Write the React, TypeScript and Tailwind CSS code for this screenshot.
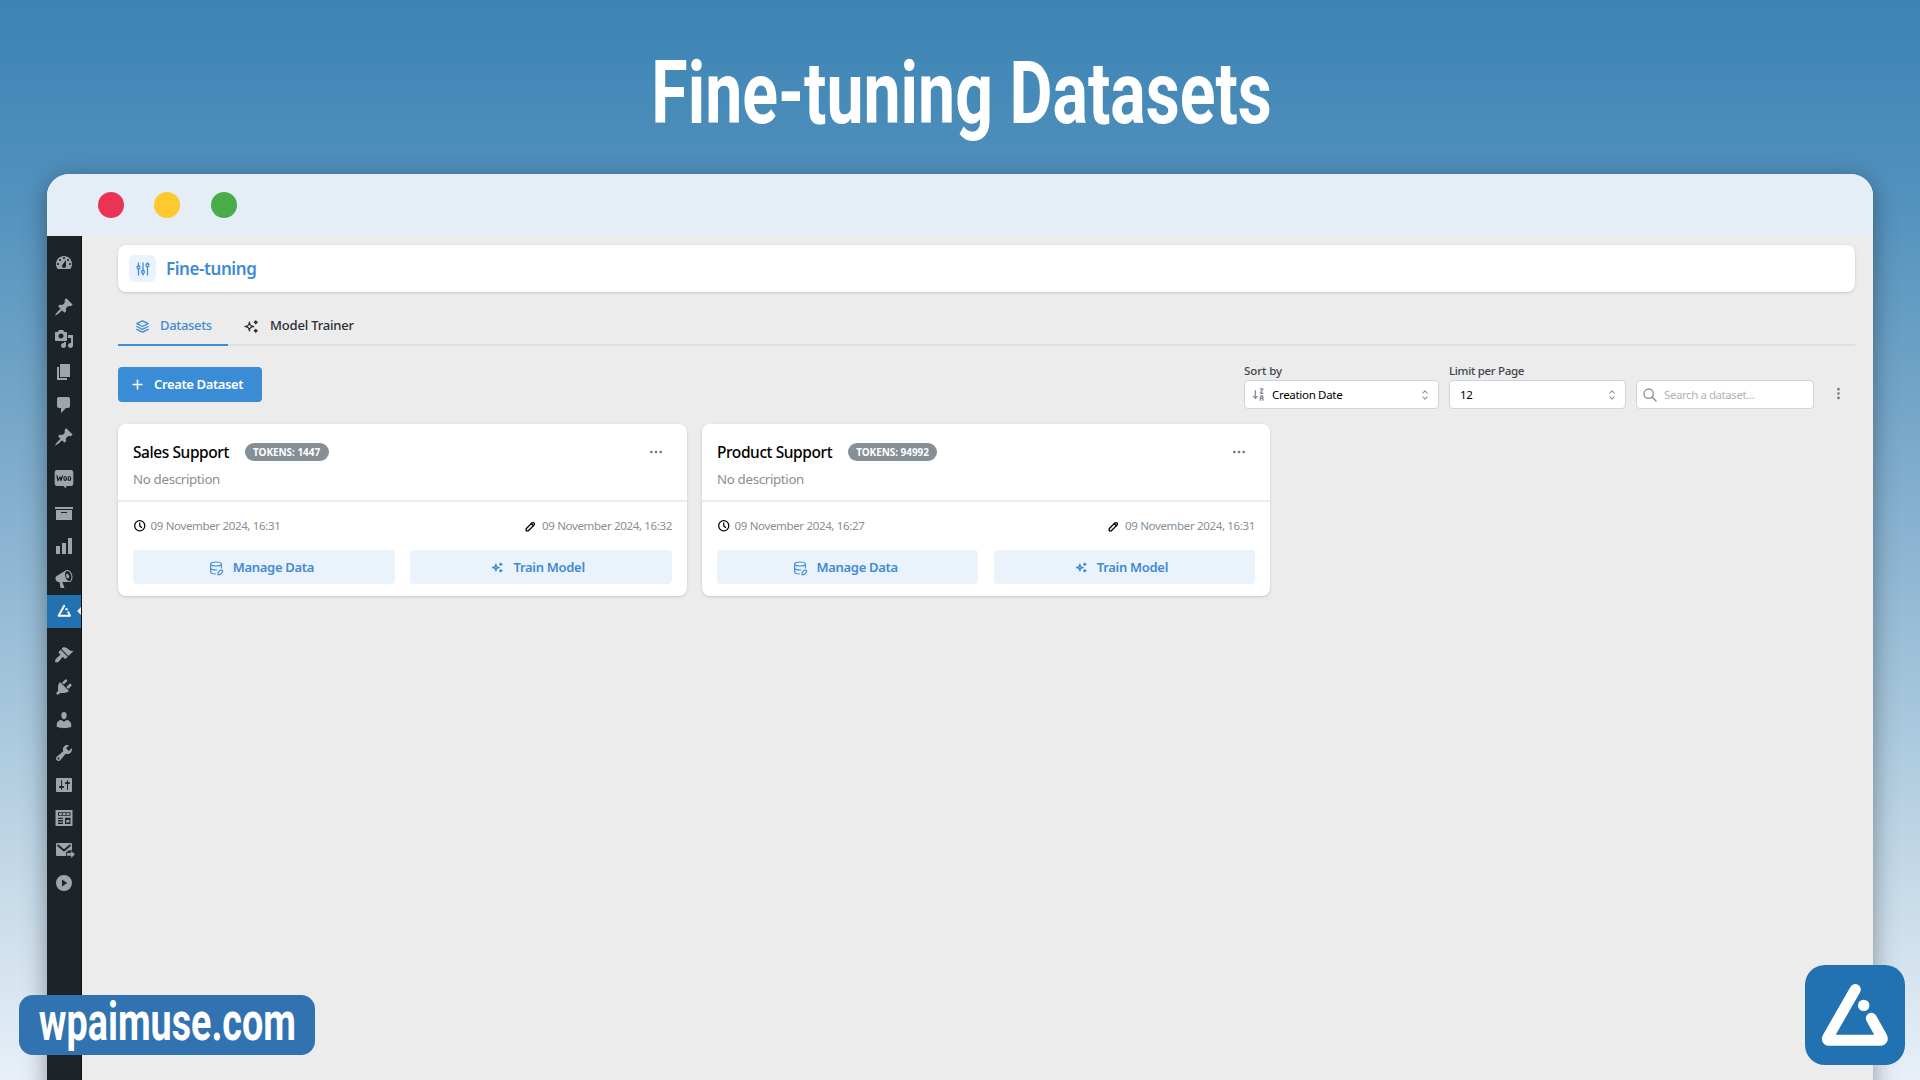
import React from 'react';
import {
  TbAdjustments, TbStack2, TbSparkles, TbSortDescendingLetters, TbDatabaseEdit,
  TbSelector, TbPencil, TbClock, TbSearch, TbPlus, TbDots, TbDotsVertical,
} from 'react-icons/tb';

type MenuItem = { name: string; gap: string; active?: boolean; draw: React.ReactNode };

const menu: MenuItem[] = [
  { name: 'Dashboard', gap: 'mt-[11px]', draw: <path fillRule="evenodd" d="M3.76 16h12.48c1.1-1.37 1.76-3.11 1.76-5 0-4.42-3.58-8-8-8s-8 3.58-8 8c0 1.89.66 3.63 1.76 5zM10 4c.55 0 1 .45 1 1s-.45 1-1 1-1-.45-1-1 .45-1 1-1zM6 6c.55 0 1 .45 1 1s-.45 1-1 1-1-.45-1-1 .45-1 1-1zm8 0c.55 0 1 .45 1 1s-.45 1-1 1-1-.45-1-1 .45-1 1-1zm-5.37 5.55L12 7v6c0 1.1-.9 2-2 2s-2-.9-2-2c0-.57.24-1.08.63-1.45zM4 10c.55 0 1 .45 1 1s-.45 1-1 1-1-.45-1-1 .45-1 1-1zm12 0c.55 0 1 .45 1 1s-.45 1-1 1-1-.45-1-1 .45-1 1-1z" /> },
  { name: 'Posts', gap: 'mt-[11px]', draw: <path d="M10.44 3.02l1.82-1.82 6.36 6.35-1.83 1.82c-1.05-.68-2.48-.57-3.41.36l-.75.75c-.92.93-1.04 2.35-.35 3.41l-1.83 1.82-2.41-2.41-2.8 2.79c-.42.42-3.38 2.71-3.8 2.29s1.86-3.39 2.28-3.81l2.79-2.79L4.1 9.36l1.83-1.82c1.05.69 2.48.57 3.4-.36l.75-.75c.93-.92 1.05-2.35.36-3.41z" /> },
  { name: 'Media', gap: '', draw: <path fillRule="evenodd" d="M13 11V4c0-.55-.45-1-1-1h-1.67L9 1H5L3.67 3H2c-.55 0-1 .45-1 1v7c0 .55.45 1 1 1h10c.55 0 1-.45 1-1zM7 4.5c1.38 0 2.5 1.12 2.5 2.5S8.38 9.5 7 9.5 4.5 8.38 4.5 7 5.62 4.5 7 4.5zM14 6h5v10.5c0 1.38-1.12 2.5-2.5 2.5S14 17.88 14 16.5s1.12-2.5 2.5-2.5c.17 0 .34.02.5.05V9h-3V6zm-4 8.05V13h2v3.5c0 1.38-1.12 2.5-2.5 2.5S7 17.88 7 16.5 8.12 14 9.5 14c.17 0 .34.02.5.05z" /> },
  { name: 'Pages', gap: '', draw: <path d="M6 15V2h10v13H6zm-1 1h8v2H3V5h2v11z" /> },
  { name: 'Comments', gap: '', draw: <path d="M5 2h9c1.1 0 2 .9 2 2v7c0 1.1-.9 2-2 2h-2l-5 5v-5H5c-1.1 0-2-.9-2-2V4c0-1.1.9-2 2-2z" /> },
  { name: 'Projects', gap: '', draw: <path d="M10.44 3.02l1.82-1.82 6.36 6.35-1.83 1.82c-1.05-.68-2.48-.57-3.41.36l-.75.75c-.92.93-1.04 2.35-.35 3.41l-1.83 1.82-2.41-2.41-2.8 2.79c-.42.42-3.38 2.71-3.8 2.29s1.86-3.39 2.28-3.81l2.79-2.79L4.1 9.36l1.83-1.82c1.05.69 2.48.57 3.4-.36l.75-.75c.93-.92 1.05-2.35.36-3.41z" /> },
  { name: 'WooCommerce', gap: 'mt-[9px]', draw: <>
      <path d="M3 1h14a2.3 2.3 0 0 1 2.300 2.300v11.400a2.300 2.300 0 0 1-2.300 2.300h-4.500l-1 2.200-2-2.200H3a2.300 2.300 0 0 1-2.300-2.300V3.300A2.300 2.300 0 0 1 3 1z" />
      <path fill="none" stroke="#1d2327" strokeWidth="1.300" strokeLinecap="round" strokeLinejoin="round" d="M3 7l1 4.500L6 8l1 3.500L8.500 7" />
      <ellipse cx="11.200" cy="9.400" rx="1.300" ry="1.900" fill="none" stroke="#1d2327" strokeWidth="1.200" />
      <ellipse cx="15.400" cy="9.400" rx="1.300" ry="1.900" fill="none" stroke="#1d2327" strokeWidth="1.200" />
    </> },
  { name: 'Products', gap: 'mt-[2px]', draw: <path fillRule="evenodd" d="M19 4v2H1V4h18zM2 7h16v10H2V7zm11 3V9H7v1h6z" /> },
  { name: 'Analytics', gap: '', draw: <path d="M18 18V2h-4v16h4zm-6 0V7H8v11h4zm-6 0v-8H2v8h4z" /> },
  { name: 'Marketing', gap: '', draw: <path fillRule="evenodd" d="M18.150 5.940c.46 1.620.38 3.220-.02 4.480-.42 1.280-1.260 2.180-2.300 2.480-.16.06-.26.06-.4.06-.06.02-.12.02-.18.02-.06.02-.14.02-.22.02h-6.800l2.220 5.500c.02.14-.06.26-.14.34-.08.1-.24.16-.34.16H6.950c-.1 0-.26-.06-.34-.16-.08-.08-.16-.2-.14-.34l-1-5.500H4.250l-.02-.02c-.5.06-1.080-.18-1.540-.62s-.88-1.080-1.060-1.880c-.24-.8-.2-1.560-.02-2.200.18-.62.58-1.080 1.060-1.300l.02-.02 9-5.400c.1-.06.18-.1.24-.16.06-.04.14-.08.24-.12.16-.08.28-.12.5-.18 1.040-.3 2.240.1 3.220.98s1.840 2.240 2.260 3.860zm-2.580 5.980h-.02c.4-.1.74-.34 1.040-.7.58-.7.86-1.760.86-3.040 0-.64-.1-1.300-.28-1.980-.34-1.360-1.020-2.500-1.780-3.240s-1.680-1.100-2.460-.88c-.82.22-1.400.96-1.700 2-.32 1.040-.28 2.360.06 3.720.38 1.360 1 2.500 1.800 3.240.78.740 1.620 1.100 2.480.88zm-2.540-7.080c.22-.04.42-.02.62.04.38.16.76.48 1.020 1s.42 1.200.42 1.780c0 .3-.04.56-.12.8-.18.48-.44.84-.86.94-.34.1-.8-.06-1.140-.4s-.64-.86-.78-1.500c-.18-.62-.12-1.240.02-1.720s.48-.84.82-.94z" /> },
  { name: 'AI Muse', gap: '', active: true, draw: <>
      <path fill="none" stroke="currentColor" strokeWidth="2.200" strokeLinecap="round" strokeLinejoin="round" d="M10.200 4.200L4 15.200h12.600l-1.900-3.900" />
      <circle cx="12.800" cy="8" r="1.300" />
    </> },
  { name: 'Appearance', gap: 'mt-[11px]', draw: <path d="M14.480 11.060L7.410 3.990l1.500-1.500c.5-.56 2.300-.47 3.510.32 1.210.8 1.430 1.280 2.910 2.100 1.180.64 2.450 1.260 4.450.85zm-.71.71L6.700 4.700 4.930 6.470c-.39.39-.39 1.020 0 1.410l1.060 1.060c.39.39.39 1.030 0 1.420-.6.6-1.430 1.110-2.210 1.690-.35.26-.7.53-1.010.84C1.430 14.230.4 16.080 1.400 17.070c.99 1 2.840-.03 4.180-1.360.31-.31.58-.66.85-1.020.57-.78 1.080-1.610 1.690-2.210.39-.39 1.020-.39 1.410 0l1.060 1.060c.39.39 1.020.39 1.410 0z" /> },
  { name: 'Plugins', gap: '', draw: <path d="M13.110 4.360L9.870 7.600 8 5.730l3.240-3.240c.35-.34 1.050-.2 1.560.32.52.51.66 1.210.31 1.550zm-8 1.770l.91-1.120 9.010 9.010-1.190.84c-.71.71-2.630 1.160-3.820 1.160H6.140L4.900 17.260c-.59.59-1.540.59-2.120 0-.59-.58-.59-1.530 0-2.120l1.240-1.240v-3.880c0-1.130.4-3.190 1.090-3.890zm7.260 3.970l3.240-3.240c.34-.35 1.040-.21 1.550.31.52.51.66 1.210.31 1.550l-3.240 3.250z" /> },
  { name: 'Users', gap: '', draw: <path d="M10 9.250c-2.270 0-2.730-3.440-2.730-3.440C7 4.020 7.820 2 9.970 2c2.160 0 2.980 2.020 2.710 3.810 0 0-.41 3.440-2.680 3.440zm0 2.570L12.720 10c2.390 0 4.520 2.330 4.520 4.530v2.490s-3.650 1.130-7.240 1.130c-3.650 0-7.240-1.130-7.240-1.130v-2.490c0-2.250 1.940-4.480 4.470-4.480z" /> },
  { name: 'Tools', gap: '', draw: <path fillRule="evenodd" d="M16.680 9.770c-1.340 1.340-3.300 1.670-4.950.99l-5.410 6.520c-.99.99-2.590.99-3.580 0s-.99-2.590 0-3.570l6.520-5.420c-.68-1.650-.35-3.610.99-4.950 1.280-1.280 3.120-1.620 4.720-1.060l-2.890 2.890 2.820 2.820 2.860-2.870c.53 1.580.18 3.390-1.080 4.650zM3.810 16.210c.4.39 1.040.39 1.430 0 .4-.4.4-1.040 0-1.430-.39-.4-1.030-.4-1.430 0-.39.39-.39 1.030 0 1.430z" /> },
  { name: 'Settings', gap: '', draw: <path fillRule="evenodd" d="M18 16V4c0-.55-.45-1-1-1H3c-.55 0-1 .45-1 1v12c0 .55.45 1 1 1h14c.55 0 1-.45 1-1zM8 11h1c.55 0 1 .45 1 1s-.45 1-1 1H8v1.500c0 .28-.22.5-.5.5s-.5-.22-.5-.5V13H6c-.55 0-1-.45-1-1s.45-1 1-1h1V5.500c0-.28.22-.5.5-.5s.5.22.5.5V11zm5-2h-1c-.55 0-1-.45-1-1s.45-1 1-1h1V5.500c0-.28.22-.5.5-.5s.5.22.5.5V7h1c.55 0 1 .45 1 1s-.45 1-1 1h-1v5.500c0 .28-.22.5-.5.5s-.5-.22-.5-.5V9z" /> },
  { name: 'Fields', gap: '', draw: <path fillRule="evenodd" d="M1.500 2h17v16h-17zM4 4.200v3.600h12.500V4.200zM5 5h2.800v2H5zm3.800 0h2.800v2H8.800zm3.800 0h2.900v2h-2.900zM4 9.800v1.200h5V9.800zm0 2.200v1.400h5V12zm0 2.600v1.400h5v-1.400zM11 9.800V16h5.500V9.800zm1.200 2.200h3.200v2.600h-3.200z" /> },
  { name: 'Mail', gap: '', draw: <>
      <path d="M3 3h14a1 1 0 0 1 1 1v6.500h-4.500V12H12v4H3a1 1 0 0 1-1-1V4a1 1 0 0 1 1-1z" />
      <path fill="none" stroke="#1d2327" strokeWidth="1.800" d="M3.500 5l6.500 5.500L16.500 5" />
      <path d="M12.500 12.800h4.300v-2.600l4.400 4.200-4.400 4.200V16h-4.300z" stroke="#1d2327" strokeWidth=".6" />
    </> },
  { name: 'Player', gap: '', draw: <path fillRule="evenodd" d="M10 2a8 8 0 1 0 0 16 8 8 0 0 0 0-16zM8 6.500v7l5.200-3.500z" /> },
];

const datasets = [
  { title: 'Sales Support', tokens: 'TOKENS: 1447', created: '09 November 2024, 16:31', edited: '09 November 2024, 16:32' },
  { title: 'Product Support', tokens: 'TOKENS: 94992', created: '09 November 2024, 16:27', edited: '09 November 2024, 16:31' },
];

function MuseMark() {
  return (
    <svg viewBox="0 0 100 100" className="size-full" fill="none">
      <path d="M50.300 24.500L22.800 72.500Q21.500 75.300 24.500 75.300H75Q78.300 75.300 76.800 72L66.300 53.300" stroke="#fff" strokeWidth="11" strokeLinecap="round" strokeLinejoin="round" />
      <circle cx="58.700" cy="40.400" r="5.700" fill="#fff" />
    </svg>
  );
}

function Sidebar() {
  return (
    <nav className="flex w-[34.500px] shrink-0 flex-col border-r border-[#0b0d0f] bg-[#1d2327]">
      {menu.map((m) => (
        <div key={m.name} className={`flex h-[32.600px] w-[34px] shrink-0 items-center justify-center ${m.gap} ${m.active ? 'relative bg-[#2271b1] text-white' : 'text-[#a0a5aa]'}`}>
          <svg viewBox="0 0 20 20" fill="currentColor" className={`${m.active ? 'size-[18px]' : 'size-5'} shrink-0 overflow-visible`}>{m.draw}</svg>
          {m.active && <span className="absolute top-[12px] right-0 border-y-[4.500px] border-r-[4px] border-y-transparent border-r-[#ececec]" />}
        </div>
      ))}
    </nav>
  );
}

function DatasetCard({ d }: { d: (typeof datasets)[number] }) {
  const action = 'flex h-[34px] items-center justify-center rounded-[4px] bg-[#eaf3fb] pt-px text-[13px] font-semibold text-[#3f8bd3]';
  return (
    <article className="h-[172px] rounded-[8px] bg-white shadow-[0_1px_3px_rgba(0,0,0,0.16)]">
      <div className="h-[78px] border-b-2 border-[#e9ecf0] px-[15px] pt-[18px]">
        <div className="flex h-[22px] items-center">
          <h2 className="text-[15.500px] font-medium tracking-[-0.420px] text-black">{d.title}</h2>
          <span className="mb-[2px] ml-[15.500px] flex h-[18px] items-center rounded-full bg-[#868e96] px-[8.500px] text-[10px] font-bold tracking-[-0.050px] text-white">{d.tokens}</span>
          <TbDots className="mr-[8px] mb-[2px] ml-auto size-[16px] text-[#6f767d]" />
        </div>
        <p className="mt-[4px] text-[13.300px] leading-[22px] tracking-[-0.330px] text-[#868e96]">No description</p>
      </div>
      <div className="px-[15px] pt-[15px]">
        <div className="flex h-[18px] items-center text-[11.500px] tracking-[-0.340px] text-[#868e96]">
          <TbClock className="mr-[4px] size-[13.500px] text-black" strokeWidth={2.200} />
          <span>{d.created}</span>
          <TbPencil className="mr-[5px] ml-auto size-[13px] text-black" strokeWidth={2.400} />
          <span>{d.edited}</span>
        </div>
        <div className="mt-[15px] grid grid-cols-2 gap-[15.500px]">
          <button className={`${action} pr-[6px] tracking-[-0.330px]`}><TbDatabaseEdit className="mr-[9px] size-[16px]" strokeWidth={1.700} />Manage Data</button>
          <button className={`${action} pr-[6px] tracking-[-0.300px]`}><TbSparkles className="mr-[9px] size-[13px]" strokeWidth={2.600} />Train Model</button>
        </div>
      </div>
    </article>
  );
}

const field = 'flex h-[29px] items-center rounded-[4px] border border-[#ced4da] bg-white text-[11.500px]';

export default function App() {
  return (
    <div className="relative h-[1080px] w-[1920px] overflow-hidden bg-[linear-gradient(180deg,#3b84b4_0px,#4f8fbc_170px,#73a5c8_400px,#a5c5db_700px,#dae7f1_1000px,#e8eff8_1080px)] font-['Noto_Sans','Open_Sans',sans-serif]">
      <header className="flex h-[174px] justify-center pt-[49px] pl-[3px]">
        <h1 className="h-[88px] scale-x-[0.752] font-['Roboto',sans-serif] text-[88px] leading-none font-bold whitespace-nowrap text-white">Fine-tuning Datasets</h1>
      </header>

      <section className="mx-[47px] flex h-[930px] flex-col overflow-hidden rounded-t-[22px] bg-[#ececec] shadow-[0_6px_24px_rgba(0,0,0,0.380)]">
        <div className="flex h-[62px] shrink-0 items-center gap-[30.500px] bg-[#e5edf6] pl-[50.500px]">
          <span className="size-[26px] rounded-full bg-[#e93456]" />
          <span className="size-[26px] rounded-full bg-[#fec92c]" />
          <span className="size-[26px] rounded-full bg-[#48ad48]" />
        </div>

        <div className="flex flex-1">
          <Sidebar />
          <main className="flex-1 pt-[9px] pr-[18px] pl-[36.500px]">
            <div className="flex h-[47px] items-center rounded-[8px] bg-white pl-[11px] shadow-[0_1px_3px_rgba(0,0,0,0.160)]">
              <span className="flex size-[27px] items-center justify-center rounded-[6px] bg-[#eaf3fb] text-[#3b8dd6]"><TbAdjustments className="size-[18px]" strokeWidth={1.700} /></span>
              <span className="ml-[10px] pt-px text-[17px] font-semibold tracking-[-0.430px] text-[#3f8bd3]">Fine-tuning</span>
            </div>

            <div className="mt-[16px] flex h-[38px] border-b-2 border-[#dde1e6] text-[13px] font-medium">
              <div className="-mb-[2px] flex w-[110px] items-center border-b-2 border-[#3b8dd6] pl-[16px] tracking-[-0.320px] text-[#3f8bd3]">
                <TbStack2 className="mr-[9px] size-[17px]" strokeWidth={1.900} />Datasets
              </div>
              <div className="-mb-[2px] flex items-center border-b-2 border-transparent pl-[15px] tracking-[-0.180px] text-[#2b2f36]">
                <TbSparkles className="mr-[10px] size-[17px]" />Model Trainer
              </div>
            </div>

            <div className="mt-[15px] flex h-[48px] items-start">
              <button className="mt-[6px] flex h-[35px] w-[144px] items-center rounded-[4px] bg-[#3a8cd6] pl-[12px] text-[13px] font-semibold tracking-[-0.370px] text-white">
                <TbPlus className="mr-[9px] size-[15px]" strokeWidth={2.400} />Create Dataset
              </button>
              <div className="ml-auto flex items-end">
                <div className="w-[195px]">
                  <div className="h-[19px] text-[11.500px] leading-[20px] font-medium tracking-[-0.080px] text-[#40464d]">Sort by</div>
                  <div className={field}>
                    <TbSortDescendingLetters className="ml-[6px] size-[15px] text-[#868e96]" strokeWidth={2.200} />
                    <span className="ml-[6px] tracking-[-0.310px] text-black">Creation Date</span>
                    <TbSelector className="mr-[6px] ml-auto size-[14px] text-[#868e96]" strokeWidth={1.800} />
                  </div>
                </div>
                <div className="ml-[10px] w-[177px]">
                  <div className="h-[19px] text-[11.500px] leading-[20px] font-medium tracking-[-0.320px] text-[#40464d]">Limit per Page</div>
                  <div className={field}>
                    <span className="ml-[10px] tracking-[-0.300px] text-black">12</span>
                    <TbSelector className="mr-[6px] ml-auto size-[14px] text-[#868e96]" strokeWidth={1.800} />
                  </div>
                </div>
                <div className={`${field} ml-[10px] w-[178px]`}>
                  <TbSearch className="ml-[5px] size-[16px] text-[#868e96]" strokeWidth={2} />
                  <span className="ml-[6px] tracking-[-0.430px] text-[#adb5bd]">Search a dataset...</span>
                </div>
                <TbDotsVertical className="mr-[9px] mb-[8px] ml-[17px] size-[15px] text-[#6f767d]" strokeWidth={2.200} />
              </div>
            </div>

            <div className="mt-[15px] grid grid-cols-[569px_568px] gap-[15px]">
              {datasets.map((d) => <DatasetCard key={d.title} d={d} />)}
            </div>
          </main>
        </div>
      </section>

      <div className="absolute top-[995px] left-[19px] flex h-[60px] w-[296px] items-start justify-center rounded-[14px] bg-[#3172b1]">
        <span className="scale-x-[0.705] font-['Roboto',sans-serif] text-[53.500px] leading-[54px] font-bold text-white">wpaimuse.com</span>
      </div>
      <div className="absolute top-[965px] left-[1805px] size-[100px] rounded-[20px] bg-[#2271b1]">
        <MuseMark />
      </div>
    </div>
  );
}
